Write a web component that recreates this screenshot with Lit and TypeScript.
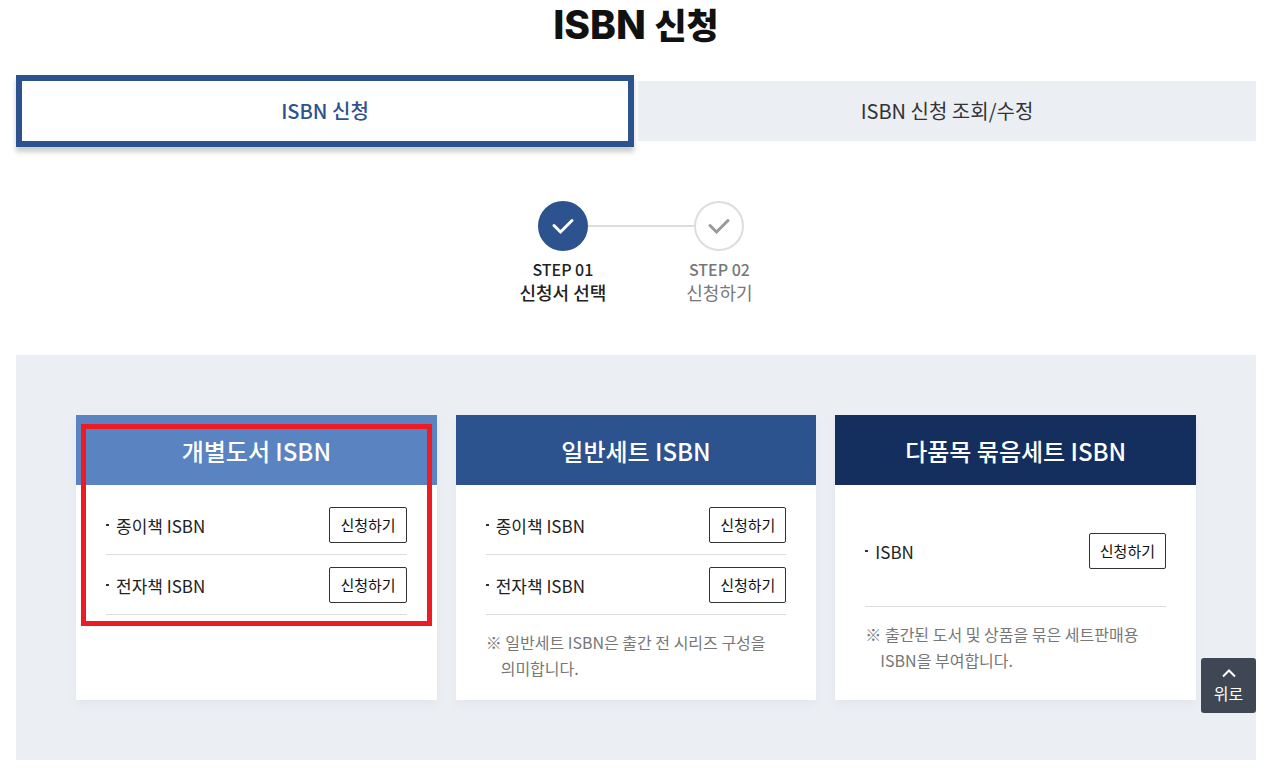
import { LitElement, html, css, nothing } from "lit";
import { customElement, property } from "lit/decorators.js";
import { classMap } from "lit/directives/class-map.js";

interface CardData {
  title: string;
  tone: string;
  items: string[];
  note?: string;
  marked?: boolean;
}

const cards: CardData[] = [
  { title: "개별도서 ISBN", tone: "light", items: ["종이책 ISBN", "전자책 ISBN"], marked: true },
  {
    title: "일반세트 ISBN",
    tone: "mid",
    items: ["종이책 ISBN", "전자책 ISBN"],
    note: "※ 일반세트 ISBN은 출간 전 시리즈 구성을 의미합니다.",
  },
  {
    title: "다품목 묶음세트 ISBN",
    tone: "dark",
    items: ["ISBN"],
    note: "※ 출간된 도서 및 상품을 묶은 세트판매용 ISBN을 부여합니다.",
  },
];

@customElement("isbn-card")
export class IsbnCard extends LitElement {
  @property({ attribute: false }) data!: CardData;

  static styles = css`
    :host {
      display: block;
      position: relative;
      background: #fff;
      box-shadow: 0 5px 10px rgba(40, 70, 110, 0.04);
      word-break: keep-all;
    }
    .title {
      margin: 0;
      padding: 18px 10px 16px;
      font-size: 24px;
      line-height: 36px;
      font-weight: 500;
      color: #fff;
      text-align: center;
    }
    .light { background: #5a83c1; }
    .mid { background: #2c538e; }
    .dark { background: #142f5e; }
    .body { padding: 10px 30px 19px; }
    .list {
      margin: 0;
      padding: 0;
      list-style: none;
    }
    .row {
      display: flex;
      align-items: center;
      box-sizing: border-box;
      min-height: 60px;
      border-bottom: 1px solid #ddd;
      font-size: 17px;
      line-height: 24px;
      color: #222;
    }
    .row::before {
      content: "";
      width: 3px;
      height: 2px;
      margin-right: 7px;
      background: #333;
    }
    .single { min-height: 112px; }
    .name { flex: 1; padding-top: 2px; }
    .apply {
      height: 36px;
      padding: 0 10px;
      border: 1px solid #333;
      border-radius: 2px;
      background: #fff;
      color: #111;
      font: inherit;
      font-size: 15px;
      line-height: 32px;
      cursor: pointer;
    }
    .note {
      margin: 14px 0 0;
      padding-left: 15px;
      text-indent: -15px;
      font-size: 16px;
      line-height: 26px;
      color: #777;
    }
    .mark {
      position: absolute;
      inset: 9px 5px 74px;
      border: 5px solid #ed1c24;
      pointer-events: none;
    }
  `;

  render() {
    const { title, tone, items, note, marked } = this.data;
    return html`
      <h2 class="title ${tone}">${title}</h2>
      <div class="body">
        <ul class="list">
          ${items.map(
            (name) => html`
              <li class=${classMap({ row: true, single: items.length === 1 })}>
                <span class="name">${name}</span>
                <button class="apply" type="button">신청하기</button>
              </li>
            `,
          )}
        </ul>
        ${note ? html`<p class="note">${note}</p>` : nothing}
      </div>
      ${marked ? html`<div class="mark"></div>` : nothing}
    `;
  }
}

@customElement("app-root")
export class AppRoot extends LitElement {
  static styles = css`
    :host {
      display: block;
      padding: 0 15px 12px 16px;
      background: #fff;
      color: #222;
      font-family: "Noto Sans CJK KR", sans-serif;
    }
    .heading {
      margin: 0;
      font-family: Inter, "Noto Sans CJK KR", sans-serif;
      font-size: 39px;
      line-height: 50px;
      font-weight: 800;
      color: #111;
      text-align: center;
    }
    .hangul {
      font-size: 35px;
      line-height: 1;
      font-weight: 900;
    }
    .tabs {
      display: grid;
      grid-template-columns: 1fr 1fr;
      align-items: center;
      gap: 4px;
      margin-top: 25px;
    }
    .tab {
      padding: 15px 0;
      background: #ebeef3;
      color: #333;
      font-size: 20px;
      line-height: 30px;
      text-align: center;
      text-decoration: none;
    }
    .current {
      border: 6px solid #2c538e;
      background: #fff;
      color: #2c538e;
      font-weight: 500;
      box-shadow: 0 5px 5px rgba(0, 0, 0, 0.2);
    }
    .steps {
      display: flex;
      justify-content: center;
      gap: 80px;
      margin: 54px 0 0;
      padding: 0;
      list-style: none;
    }
    .step {
      display: flex;
      flex-direction: column;
      align-items: center;
      color: #777;
      font-size: 18px;
      line-height: 23px;
    }
    .dot {
      position: relative;
      box-sizing: border-box;
      width: 50px;
      height: 50px;
      margin-bottom: 7px;
      border: 2px solid #ddd;
      border-radius: 50%;
      color: #999;
    }
    .dot svg { display: block; }
    .no { font-size: 16px; font-weight: 500; }
    .active { color: #222; font-weight: 500; }
    .active .dot {
      border-color: #2c538e;
      background: #2c538e;
      color: #fff;
    }
    .active .dot::after {
      content: "";
      position: absolute;
      top: 22px;
      left: 48px;
      width: 106px;
      height: 2px;
      background: #ddd;
    }
    .panel {
      display: grid;
      grid-template-columns: repeat(3, 1fr);
      gap: 19px;
      margin-top: 51px;
      padding: 60px;
      background: #ebeef3;
    }
    .top {
      position: fixed;
      right: 15px;
      bottom: 59px;
      display: flex;
      flex-direction: column;
      align-items: center;
      width: 55px;
      height: 55px;
      padding: 11px 0 0;
      border: 0;
      border-radius: 3px;
      background: #404754;
      color: #fff;
      font: inherit;
      font-size: 16px;
      line-height: 24px;
      cursor: pointer;
    }
    .top svg { display: block; margin-bottom: 3px; }
  `;

  private check() {
    return html`<svg width="46" height="46" viewBox="0 0 46 46" fill="none" stroke="currentColor" stroke-width="3" aria-hidden="true">
      <path d="M14 22.500l6.500 6.500L32 17.500" stroke-linecap="round" stroke-linejoin="miter" />
    </svg>`;
  }

  render() {
    return html`
      <h1 class="heading">ISBN <span class="hangul">신청</span></h1>
      <nav class="tabs">
        <a class="tab current" href="#apply" aria-current="page">ISBN 신청</a>
        <a class="tab" href="#history">ISBN 신청 조회/수정</a>
      </nav>
      <ol class="steps">
        <li class="step active">
          <span class="dot">${this.check()}</span>
          <span class="no">STEP 01</span>
          <span>신청서 선택</span>
        </li>
        <li class="step">
          <span class="dot">${this.check()}</span>
          <span class="no">STEP 02</span>
          <span>신청하기</span>
        </li>
      </ol>
      <section class="panel">
        ${cards.map((card) => html`<isbn-card .data=${card}></isbn-card>`)}
      </section>
      <button class="top" type="button">
        <svg width="14" height="9" viewBox="0 0 14 9" fill="none" stroke="currentColor" stroke-width="2" aria-hidden="true">
          <path d="M1 7.500L7 1.500l6 6" />
        </svg>
        위로
      </button>
    `;
  }
}
